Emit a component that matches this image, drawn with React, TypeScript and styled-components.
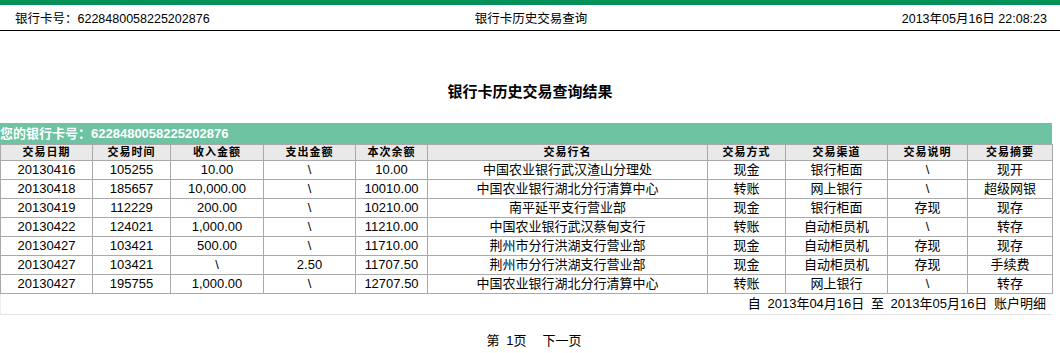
import styled, { createGlobalStyle } from "styled-components";

const GlobalStyle = createGlobalStyle`
  body {
    margin: 0;
    background: #fff;
    font-family: "Liberation Sans", Arial, "Noto Sans CJK SC", sans-serif;
    color: #000;
  }
`;

const TopBar = styled.div`
  height: 5px;
  background: #039158;
`;

const HeaderRow = styled.div`
  display: flex;
  justify-content: space-between;
  align-items: flex-end;
  height: 26px;
  padding: 0 13px 3px 15px;
  border-bottom: 1px solid #000;
  font-size: 12.5px;
  line-height: 15px;
  box-sizing: border-box;
`;

const HeaderCell = styled.div<{ $align: "left" | "center" | "right" }>`
  flex: 1;
  text-align: ${(p) => p.$align};
`;

const Title = styled.h1`
  margin: 0;
  padding-top: 52px;
  height: 92px;
  box-sizing: border-box;
  text-align: center;
  font-size: 15px;
  line-height: 18px;
  font-weight: bold;
`;

const Panel = styled.div`
  width: 1052px;
  border-bottom: 1px solid #e2e2e2;
  border-left: 1px solid #ececec;
  box-sizing: border-box;
`;

const Caption = styled.div`
  height: 21px;
  line-height: 21px;
  background: #6dc3a2;
  color: #fff;
  font-weight: bold;
  font-size: 13px;
  margin-left: -1px;
`;

const Table = styled.table`
  width: 1052px;
  margin-left: -1px;
  border-collapse: collapse;
  table-layout: fixed;
  font-size: 13px;
`;

const Col = styled.col<{ $w: number }>`
  width: ${(p) => p.$w}px;
`;

const Th = styled.th`
  height: 15px;
  padding: 0;
  background: #e9e9e9;
  border: 1px solid #a9a9a9;
  font-size: 11px;
  letter-spacing: 1px;
  font-weight: bold;
  text-align: center;
  line-height: 15px;
`;

const Td = styled.td`
  height: 18px;
  padding: 0;
  border: 1px solid #a9a9a9;
  text-align: center;
  line-height: 18px;
  white-space: nowrap;
  overflow: hidden;
`;

const Footer = styled.div`
  height: 19px;
  line-height: 19px;
  text-align: right;
  font-size: 13px;
  padding-right: 6px;
  word-spacing: 3px;
`;

const Spacer = styled.div`
  height: 1px;
`;

const Pager = styled.div`
  margin-top: 18px;
  text-align: center;
  font-size: 13px;
  line-height: 15px;
  padding-left: 8px;
  word-spacing: 3px;
`;

const PagerLink = styled.span`
  margin-left: 16px;
  cursor: pointer;
`;

const columns: [string, number][] = [
  ["交易日期", 92],
  ["交易时间", 78],
  ["收入金额", 93],
  ["支出金额", 92],
  ["本次余额", 72],
  ["交易行名", 280],
  ["交易方式", 78],
  ["交易渠道", 102],
  ["交易说明", 80],
  ["交易摘要", 85],
];

const rows: string[][] = [
  ["20130416", "105255", "10.00", "\\", "10.00", "中国农业银行武汉渣山分理处", "现金", "银行柜面", "\\", "现开"],
  ["20130418", "185657", "10,000.00", "\\", "10010.00", "中国农业银行湖北分行清算中心", "转账", "网上银行", "\\", "超级网银"],
  ["20130419", "112229", "200.00", "\\", "10210.00", "南平延平支行营业部", "现金", "银行柜面", "存现", "现存"],
  ["20130422", "124021", "1,000.00", "\\", "11210.00", "中国农业银行武汉蔡甸支行", "转账", "自动柜员机", "\\", "转存"],
  ["20130427", "103421", "500.00", "\\", "11710.00", "荆州市分行洪湖支行营业部", "现金", "自动柜员机", "存现", "现存"],
  ["20130427", "103421", "\\", "2.50", "11707.50", "荆州市分行洪湖支行营业部", "现金", "自动柜员机", "存现", "手续费"],
  ["20130427", "195755", "1,000.00", "\\", "12707.50", "中国农业银行湖北分行清算中心", "转账", "网上银行", "\\", "转存"],
];

const App = () => {
  return (
    <>
      <GlobalStyle />
      <TopBar />
      <HeaderRow>
        <HeaderCell $align="left">银行卡号：6228480058225202876</HeaderCell>
        <HeaderCell $align="center">银行卡历史交易查询</HeaderCell>
        <HeaderCell $align="right">2013年05月16日 22:08:23</HeaderCell>
      </HeaderRow>
      <Title>银行卡历史交易查询结果</Title>
      <Panel>
        <Caption>您的银行卡号：6228480058225202876</Caption>
        <Table>
          <colgroup>
            {columns.map(([name, w]) => (
              <Col key={name} $w={w} />
            ))}
          </colgroup>
          <thead>
            <tr>
              {columns.map(([name]) => (
                <Th key={name}>{name}</Th>
              ))}
            </tr>
          </thead>
          <tbody>
            {rows.map((r, i) => (
              <tr key={i}>
                {r.map((c, j) => (
                  <Td key={j}>{c}</Td>
                ))}
              </tr>
            ))}
          </tbody>
        </Table>
        <Footer>自 2013年04月16日 至 2013年05月16日 账户明细</Footer>
        <Spacer />
      </Panel>
      <Pager>
        第 1页<PagerLink>下一页</PagerLink>
      </Pager>
    </>
  );
};

export default App;
